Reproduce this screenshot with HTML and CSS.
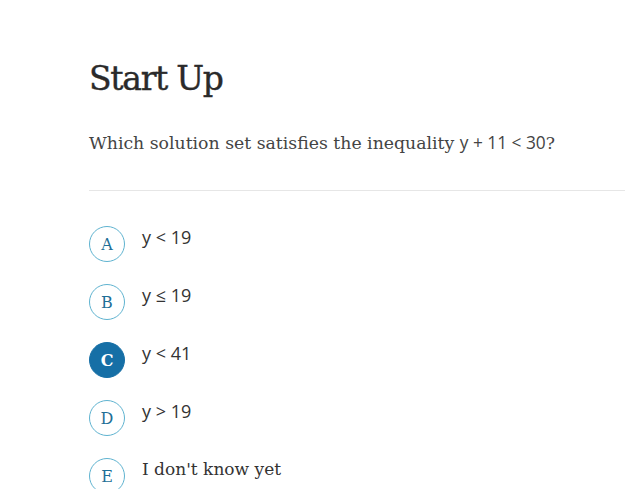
FILE: index.html
```html
<!DOCTYPE html>
<html>
<head>
<meta charset="utf-8">
<link rel="stylesheet" href="styles.css">
</head>
<body>
<main class="page">
  <h1 class="title">Start Up</h1>
  <p class="question">Which solution set satisfies the inequality <span class="math">y + 11 &lt; 30</span>?</p>
  <hr class="divider">
  <ul class="choices">
    <li class="choice"><span class="bubble">A</span><span class="label math">y &lt; 19</span></li>
    <li class="choice"><span class="bubble">B</span><span class="label math">y ≤ 19</span></li>
    <li class="choice"><span class="bubble selected">C</span><span class="label math">y &lt; 41</span></li>
    <li class="choice"><span class="bubble">D</span><span class="label math">y &gt; 19</span></li>
    <li class="choice"><span class="bubble">E</span><span class="label">I don't know yet</span></li>
  </ul>
</main>
</body>
</html>
```
FILE: styles.css
```css
html, body {
  margin: 0;
  padding: 0;
  background: #ffffff;
  overflow: hidden;
}
.page {
  padding: 59px 0 0 89px;
  font-family: "DejaVu Serif", serif;
  color: #333;
}
.title {
  margin: 0;
  font-size: 33px;
  font-weight: normal;
  letter-spacing: -1.3px;
  line-height: 40px;
  color: #2a2a2a;
  -webkit-text-stroke: 0.4px #2a2a2a;
}
.question {
  margin: 32px 0 0 0;
  font-size: 17.3px;
  line-height: 24px;
  color: #444;
}
.math {
  font-family: "Open Sans", sans-serif;
}
.divider {
  margin: 35px 0 0 0;
  border: 0;
  border-top: 1px solid #e6e6e6;
  height: 0;
}
.choices {
  list-style: none;
  margin: 35px 0 0 0;
  padding: 0;
  display: flex;
  flex-direction: column;
  gap: 22px;
}
.choice {
  display: flex;
  align-items: flex-start;
  gap: 17px;
}
.bubble {
  box-sizing: border-box;
  width: 36px;
  height: 36px;
  border-radius: 50%;
  border: 1px solid #5fb3d0;
  color: #1f6f97;
  display: flex;
  align-items: center;
  justify-content: center;
  font-size: 16px;
  flex: none;
}
.bubble.selected {
  background: #166fa6;
  border-color: #166fa6;
  color: #fff;
  font-weight: bold;
}
.label {
  font-size: 17px;
  line-height: 24px;
  color: #333;
  margin-top: -1px;
}
.label.math {
  font-size: 18px;
}
```
